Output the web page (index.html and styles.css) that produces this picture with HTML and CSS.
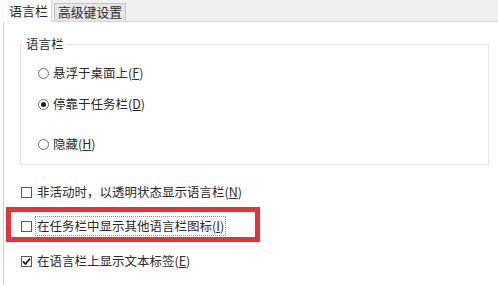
FILE: index.html
```html
<!DOCTYPE html>
<html lang="zh-CN">
<head>
<meta charset="utf-8">
<link rel="stylesheet" href="styles.css">
</head>
<body>
<div class="window">
  <div class="tabs">
    <div class="tab active">语言栏</div>
    <div class="tab-line">
      <div class="tab inactive">高级键设置</div>
    </div>
  </div>
  <div class="panel">
    <fieldset class="group">
      <legend class="legend">语言栏</legend>
      <div class="row r1"><span class="radio"></span><span>悬浮于桌面上(<u>F</u>)</span></div>
      <div class="row r2"><span class="radio checked"></span><span>停靠于任务栏(<u>D</u>)</span></div>
      <div class="row r3"><span class="radio"></span><span>隐藏(<u>H</u>)</span></div>
    </fieldset>
    <div class="row c1"><span class="check"></span><span>非活动时，以透明状态显示语言栏(<u>N</u>)</span></div>
    <div class="highlight">
      <div class="row c2"><span class="check"></span><span class="focus">在任务栏中显示其他语言栏图标(<u>I</u>)</span></div>
    </div>
    <div class="row c3"><span class="check"><svg width="9" height="9" viewBox="0 0 9 9"><path d="M1 4.5 L3.5 7 L8 1.5" fill="none" stroke="#222" stroke-width="1.8"/></svg></span><span>在语言栏上显示文本标签(<u>E</u>)</span></div>
  </div>
</div>
</body>
</html>
```
FILE: styles.css
```css
html, body {
  margin: 0;
  padding: 0;
  background: #fff;
}
body {
  font-family: "Noto Sans CJK SC", "Microsoft YaHei", sans-serif;
  font-size: 12.5px;
  color: #2a2a2a;
}
.window {
  width: 498px;
  height: 285px;
  overflow: hidden;
  display: flex;
  flex-direction: column;
}
.tabs {
  display: flex;
  height: 22px;
  background: #f0f0f0;
  flex: none;
}
.tab {
  line-height: 16px;
  white-space: nowrap;
}
.tab.active {
  width: 52px;
  background: #fff;
  border-right: 1px solid #d6d6d6;
  box-sizing: border-box;
  padding: 3px 0 0 9px;
  font-size: 13px;
}
.tab-line {
  flex: 1;
  display: flex;
  align-items: flex-end;
  border-bottom: 1px solid #d4d4d4;
  padding-left: 2px;
}
.tab.inactive {
  height: 18px;
  box-sizing: border-box;
  background: #e6e6e6;
  border: 1px solid #c4c4c4;
  border-bottom: none;
  padding: 0 3px 0 3px;
  font-size: 12.8px;
}
.panel {
  flex: 1;
  margin-left: 3px;
  border-left: 1px solid #d0d0d0;
  display: flex;
  flex-direction: column;
  align-items: flex-start;
}
.group {
  margin: 15px 0 0 16px;
  padding: 0 0 12px 17px;
  width: 469px;
  box-sizing: border-box;
  border: 1px solid #e2e2e2;
  min-width: 0;
}
.legend {
  padding: 0 3px;
  margin-left: -15px;
  line-height: 14px;
}
.row {
  display: flex;
  align-items: center;
  height: 16px;
  line-height: 16px;
  white-space: nowrap;
}
.radio {
  width: 11px;
  height: 11px;
  box-sizing: border-box;
  border: 1px solid #6a6a6a;
  border-radius: 50%;
  margin-right: 4px;
  display: flex;
  align-items: center;
  justify-content: center;
  flex: none;
}
.radio.checked::after {
  content: "";
  width: 5px;
  height: 5px;
  border-radius: 50%;
  background: #222;
}
.r1 { margin-top: 14px; }
.r2 { margin-top: 15px; }
.r3 { margin-top: 24px; }
.check {
  width: 11px;
  height: 11px;
  box-sizing: border-box;
  border: 1px solid #5a5a5a;
  background: #fff;
  margin-right: 5px;
  display: flex;
  align-items: center;
  justify-content: center;
  flex: none;
}
.c1 { margin: 19px 0 0 17px; }
.highlight {
  margin: 7px 0 0 2px;
  width: 254px;
  height: 35px;
  box-sizing: border-box;
  border: 5px solid #e8323a;
  padding: 4px 0 0 10px;
}
.c2 {
  height: 20px;
}
.c2 .check { margin-right: 3px; }
.focus {
  border: 1px dotted #8a8a8a;
  padding: 0 1px;
  line-height: 18px;
}
.c3 { margin: 11px 0 0 17px; }
u {
  text-decoration: underline;
  text-underline-offset: 1px;
}
```
